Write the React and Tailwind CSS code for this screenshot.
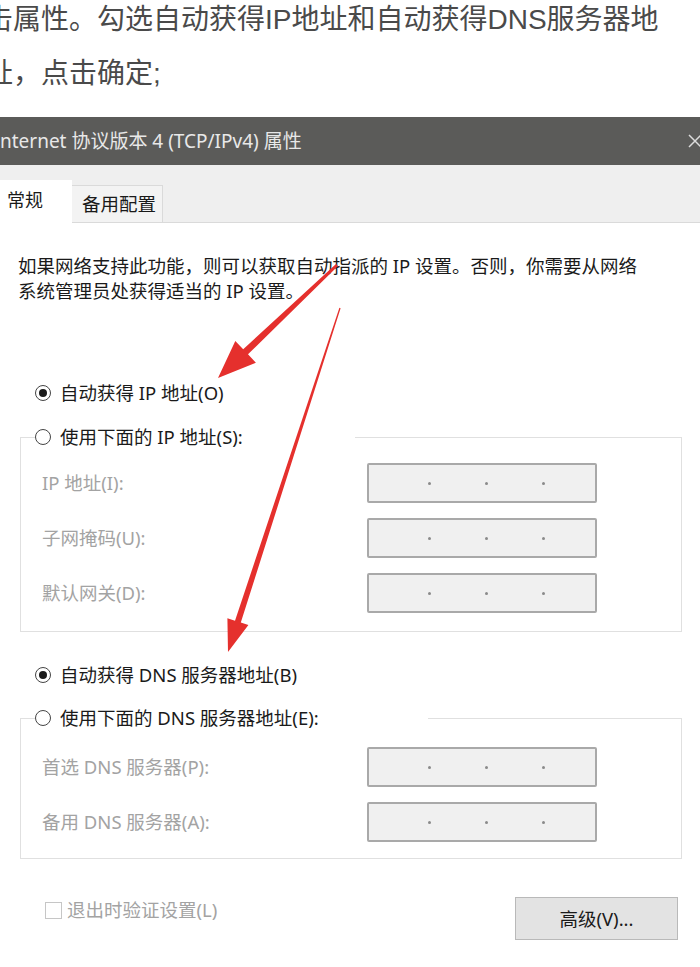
const article = '"Liberation Sans", "Noto Sans CJK SC", sans-serif';
const dialog = '"Noto Sans", "Noto Sans CJK SC", sans-serif';

function Radio({ checked, label }) {
  return (
    <div className="flex items-center h-[26px] gap-[9px]">
      <span className="w-[16px] h-[16px] rounded-full border border-[#444] bg-white flex items-center justify-center shrink-0">
        {checked && <span className="w-[8px] h-[8px] rounded-full bg-[#1a1a1a]"></span>}
      </span>
      <span className="text-[18.5px] leading-[26px] text-[#1a1a1a] whitespace-nowrap">{label}</span>
    </div>
  );
}

function IpField({ label }) {
  return (
    <div className="flex items-center h-[40px] pl-[7px]">
      <span className="w-[325px] text-[18.5px] text-[#a3a3a3] whitespace-nowrap">{label}</span>
      <div className="w-[230px] h-[40px] bg-[#f0f0f0] border-2 border-[#a9a9a9] rounded-[2px] flex items-center pl-[59px] gap-[54px]">
        <span className="w-[3px] h-[3px] rounded-full bg-[#8a8a8a]"></span>
        <span className="w-[3px] h-[3px] rounded-full bg-[#8a8a8a]"></span>
        <span className="w-[3px] h-[3px] rounded-full bg-[#8a8a8a]"></span>
      </div>
    </div>
  );
}

function Group({ legend, legendWidth, top, bottom, children }) {
  return (
    <fieldset className={`ml-[20px] w-[662px] border border-[#e0e0e0] px-[14px] ${top} ${bottom}`}>
      <legend className={`p-0 ${legendWidth}`}>
        <Radio label={legend} />
      </legend>
      <div className="flex flex-col gap-[15px]">{children}</div>
    </fieldset>
  );
}

export default function App() {
  return (
    <div className="w-[700px] h-[967px] overflow-hidden relative bg-white">
      <div className="-mt-[7px] -ml-[15px] text-[28px] leading-[54px] text-[#4a4a4a] whitespace-nowrap" style={{ fontFamily: article }}>
        <div>击属性。勾选自动获得IP地址和自动获得DNS服务器地</div>
        <div>址，点击确定;</div>
      </div>

      <div className="mt-[16px]" style={{ fontFamily: dialog }}>
        <div className="h-[48px] bg-[#5b5b59] flex items-center justify-between">
          <span className="text-[19px] text-[#e8e8e8] whitespace-nowrap">nternet 协议版本 4 (TCP/IPv4) 属性</span>
          <svg width="16" height="16" viewBox="0 0 16 16" className="mr-[-3px]">
            <path d="M2 2L14 14M14 2L2 14" stroke="#dcdcdc" strokeWidth="1.5" />
          </svg>
        </div>

        <div className="h-[58px] bg-[#efefef] border-b border-[#dadada] flex items-end">
          <div className="w-[72px] h-[43px] -mb-px bg-white pl-[7px] pt-[7px] text-[18px] leading-[26px] text-[#1a1a1a]">常规</div>
          <div className="w-[91px] h-[37px] bg-[#f3f3f3] border-t border-r border-[#dadada] pl-[10px] pt-[5px] text-[18.5px] leading-[26px] text-[#1a1a1a]">备用配置</div>
        </div>

        <div className="bg-white">
          <div className="pt-[30px] pl-[18px] text-[18.5px] leading-[25px] text-[#1a1a1a] whitespace-nowrap">
            <div>如果网络支持此功能，则可以获取自动指派的 IP 设置。否则，你需要从网络</div>
            <div>系统管理员处获得适当的 IP 设置。</div>
          </div>

          <div className="mt-[77px] pl-[35px]">
            <Radio checked label="自动获得 IP 地址(O)" />
          </div>

          <div className="mt-[18px]">
            <Group legend="使用下面的 IP 地址(S):" legendWidth="w-[320px]" top="pt-[13px]" bottom="pb-[18px]">
              <IpField label="IP 地址(I):" />
              <IpField label="子网掩码(U):" />
              <IpField label="默认网关(D):" />
            </Group>
          </div>

          <div className="mt-[30px] pl-[35px]">
            <Radio checked label="自动获得 DNS 服务器地址(B)" />
          </div>

          <div className="mt-[17px]">
            <Group legend="使用下面的 DNS 服务器地址(E):" legendWidth="w-[393px]" top="pt-[16px]" bottom="pb-[16px]">
              <IpField label="首选 DNS 服务器(P):" />
              <IpField label="备用 DNS 服务器(A):" />
            </Group>
          </div>

          <div className="mt-[38px] flex items-start justify-between pl-[45px] pr-[22px]">
            <div className="flex items-center h-[26px] gap-[5px]">
              <span className="w-[17px] h-[17px] border border-[#c6c6c6] bg-white"></span>
              <span className="text-[18.5px] text-[#a3a3a3] whitespace-nowrap">退出时验证设置(L)</span>
            </div>
            <button className="w-[163px] h-[43px] bg-[#e3e3e3] border border-[#b9b9b9] text-[18.5px] text-[#1a1a1a]">高级(V)...</button>
          </div>
        </div>
      </div>

      <svg className="absolute left-0 top-0 pointer-events-none" width="700" height="967" viewBox="0 0 700 967">
        <polygon fill="#e5302d" points="338,266.1 336,263.9 243.2,349.3 235.3,340.9 218,378 255.9,362.7 248,354.3" />
        <polygon fill="#e5302d" points="340.6,308.2 339.4,307.8 235,620.7 227.4,618.2 228,652 248.4,625 240.8,622.5" />
      </svg>
    </div>
  );
}
